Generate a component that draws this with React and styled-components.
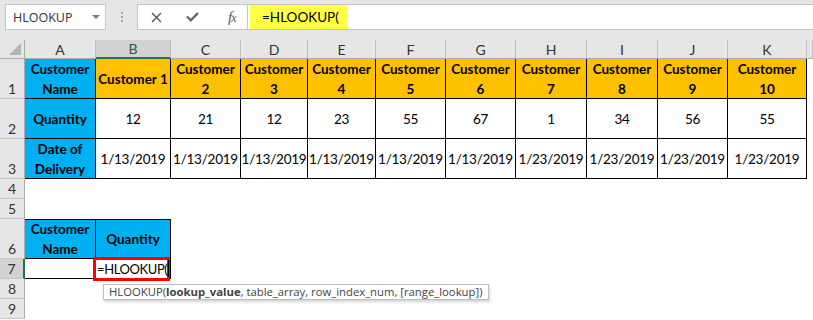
import React from 'react';
import styled, { createGlobalStyle } from 'styled-components';

const GlobalStyle = createGlobalStyle`
  body {
    margin: 0;
    background: #fff;
    font-family: Lato, "Liberation Sans", sans-serif;
    overflow: hidden;
  }
`;

const Toolbar = styled.div`
  height: 40px;
  background: #e6e6e6;
  display: flex;
  align-items: flex-start;
  padding-top: 4px;
  box-sizing: border-box;
`;

const NameBox = styled.div`
  margin-left: 5px;
  width: 101px;
  height: 26px;
  box-sizing: border-box;
  background: #fff;
  border: 1px solid #c6c6c6;
  display: flex;
  align-items: center;
  justify-content: space-between;
  padding: 0 5px 0 7px;
  font-family: "Open Sans", sans-serif;
  font-size: 12.5px;
  color: #333;
`;

const Grip = styled.div`
  width: 31px;
  display: flex;
  flex-direction: column;
  align-items: center;
  gap: 2px;
  padding-top: 8px;

  span {
    width: 2px;
    height: 2px;
    background: #a6a6a6;
  }
`;

const FxButtons = styled.div`
  width: 111px;
  height: 26px;
  box-sizing: border-box;
  background: #fff;
  border: 1px solid #c6c6c6;
  display: flex;
  align-items: center;
  padding-left: 13px;
  gap: 24px;
`;

const FxLabel = styled.span`
  font-family: "Liberation Serif", serif;
  font-style: italic;
  font-size: 15px;
  color: #555;
  margin-left: 5px;
  letter-spacing: -1px;

  sub {
    font-size: 12px;
    vertical-align: baseline;
  }
`;

const FormulaBar = styled.div`
  flex: 1;
  height: 26px;
  box-sizing: border-box;
  background: #fff;
  border: 1px solid #c6c6c6;
  border-left: none;
  border-right: none;
  padding-left: 2px;
  display: flex;
`;

const Highlight = styled.span`
  display: inline-block;
  box-sizing: border-box;
  width: 97px;
  background: #ffff45;
  padding-left: 12px;
  font-size: 13.5px;
  line-height: 24px;
  color: #000;
  white-space: nowrap;
`;

const Sheet = styled.div`
  display: grid;
  grid-template-columns: 25px 71px 75px 70px 67px 68px 70px 70px 71px 71px 70px 79px 1fr;
  grid-template-rows: 19px 40px 40px 40px 20px 20px 40px 20px 20px 20px;
  color: #000;
`;

const Corner = styled.div`
  background: #e6e6e6;
  border-right: 1px solid #ababab;
  border-bottom: 1px solid #ababab;
  display: flex;
  align-items: flex-end;
  justify-content: flex-end;
  padding: 0 3px 3px 0;
`;

const ColHead = styled.div`
  background: ${(p) => (p.$active ? '#d2d2d2' : '#e6e6e6')};
  border-right: 1px solid #c0c0c0;
  border-bottom: ${(p) => (p.$active ? '2px solid #217346' : '1px solid #ababab')};
  display: flex;
  align-items: center;
  justify-content: center;
  color: ${(p) => (p.$active ? '#1e5c3a' : '#333')};
  font-size: 14px;
`;

const RowHead = styled.div`
  background: ${(p) => (p.$active ? '#d2d2d2' : '#e6e6e6')};
  border-bottom: 1px solid #c8c8c8;
  border-right: ${(p) => (p.$active ? '2px solid #217346' : '1px solid #ababab')};
  display: flex;
  align-items: flex-end;
  justify-content: center;
  color: #333;
  font-size: 14px;
  line-height: 19px;
`;

const fills = { blue: '#00b0f0', orange: '#ffc000' };

const Cell = styled.div`
  position: relative;
  box-sizing: border-box;
  background: ${(p) => fills[p.$fill] || '#fff'};
  border-right: ${(p) => (p.$boxed ? '1px solid #000' : 'none')};
  border-bottom: ${(p) => (p.$boxed ? '1px solid #000' : 'none')};
  border-top: ${(p) => (p.$top ? '1px solid #000' : 'none')};
  font-weight: ${(p) => (p.$bold ? 700 : 400)};
  font-size: 13.5px;
  letter-spacing: ${(p) => (p.$bold ? '0' : '-0.25px')};
  display: flex;
  align-items: center;
  justify-content: ${(p) => (p.$left ? 'flex-start' : 'center')};
  text-align: center;
  white-space: pre;
  line-height: 20px;
  padding: ${(p) => (p.$left ? '0 0 0 1px' : '0')};
`;

const ActiveText = styled.span`
  font-size: 13px;
  letter-spacing: -0.4px;
  z-index: 3;
`;

const RedFrame = styled.div`
  position: absolute;
  top: -2px;
  left: -3px;
  right: 0;
  bottom: -3px;
  border: 3px solid #ff0000;
  z-index: 2;
`;

const Caret = styled.span`
  display: inline-block;
  width: 1px;
  height: 17px;
  background: #000;
  margin-left: 1px;
  z-index: 3;
`;

const Tooltip = styled.div`
  position: absolute;
  top: 25px;
  left: 7px;
  width: 386px;
  height: 16px;
  box-sizing: border-box;
  background: #fff;
  border: 1px solid #bdbdbd;
  box-shadow: 1px 2px 3px rgba(0, 0, 0, 0.18);
  font-family: "Open Sans", sans-serif;
  font-size: 11.3px;
  letter-spacing: 0;
  line-height: 14px;
  color: #444;
  padding-left: 5px;
  white-space: nowrap;
  text-align: left;
  z-index: 3;

  b {
    font-weight: 700;
  }
`;

const columns = ['A', 'B', 'C', 'D', 'E', 'F', 'G', 'H', 'I', 'J', 'K'];
const quantities = [12, 21, 12, 23, 55, 67, 1, 34, 56, 55];
const dates = [...Array(6).fill('1/13/2019'), ...Array(4).fill('1/23/2019')];
const customers = quantities.map((_, i) => (i === 0 ? 'Customer 1' : `Customer\n${i + 1}`));

const empty = () => Array(11).fill(null);

const rows = [
  [
    { t: 'Customer\nName', fill: 'blue', bold: true, boxed: true },
    ...customers.map((t) => ({ t, fill: 'orange', bold: true, boxed: true })),
  ],
  [
    { t: 'Quantity', fill: 'blue', bold: true, boxed: true },
    ...quantities.map((q) => ({ t: String(q), boxed: true })),
  ],
  [
    { t: 'Date of\nDelivery', fill: 'blue', bold: true, boxed: true },
    ...dates.map((t) => ({ t, boxed: true })),
  ],
  empty(),
  empty(),
  [
    { t: 'Customer\nName', fill: 'blue', bold: true, boxed: true, top: true },
    { t: 'Quantity', fill: 'blue', bold: true, boxed: true, top: true },
    ...Array(9).fill(null),
  ],
  [{ t: '', boxed: true }, { active: true, boxed: true }, ...Array(9).fill(null)],
  empty(),
  empty(),
];

const Cross = () => (
  <svg width="11" height="11" viewBox="0 0 11 11">
    <path d="M1 1L10 10M10 1L1 10" stroke="#555" strokeWidth="1.4" fill="none" />
  </svg>
);

const Check = () => (
  <svg width="13" height="10" viewBox="0 0 13 10">
    <path d="M1 4.5L4.8 8.3L12 1" stroke="#666" strokeWidth="2.4" fill="none" />
  </svg>
);

const App = () => (
  <>
    <GlobalStyle />
    <Toolbar>
      <NameBox>
        HLOOKUP
        <svg width="8" height="4" viewBox="0 0 8 4">
          <path d="M0 0H8L4 4Z" fill="#777" />
        </svg>
      </NameBox>
      <Grip>
        <span />
        <span />
        <span />
      </Grip>
      <FxButtons>
        <Cross />
        <Check />
        <FxLabel>
          f<sub>x</sub>
        </FxLabel>
      </FxButtons>
      <FormulaBar>
        <Highlight>=HLOOKUP(</Highlight>
      </FormulaBar>
    </Toolbar>
    <Sheet>
      <Corner>
        <svg width="12" height="12" viewBox="0 0 12 12">
          <path d="M12 0V12H0Z" fill="#b4b4b4" />
        </svg>
      </Corner>
      {columns.map((c) => (
        <ColHead key={c} $active={c === 'B'}>
          {c}
        </ColHead>
      ))}
      <ColHead />
      {rows.map((cells, r) => (
        <React.Fragment key={r}>
          <RowHead $active={r === 6}>{r + 1}</RowHead>
          {cells.map((c, i) =>
            c && c.active ? (
              <Cell key={i} $boxed $left>
                <ActiveText>=HLOOKUP(</ActiveText>
                <Caret />
                <RedFrame />
                <Tooltip>
                  HLOOKUP(<b>lookup_value</b>, table_array, row_index_num, [range_lookup])
                </Tooltip>
              </Cell>
            ) : (
              <Cell
                key={i}
                $fill={c?.fill}
                $bold={c?.bold}
                $boxed={c?.boxed}
                $top={c?.top}
              >
                {c?.t}
              </Cell>
            )
          )}
          <Cell />
        </React.Fragment>
      ))}
    </Sheet>
  </>
);

export default App;
